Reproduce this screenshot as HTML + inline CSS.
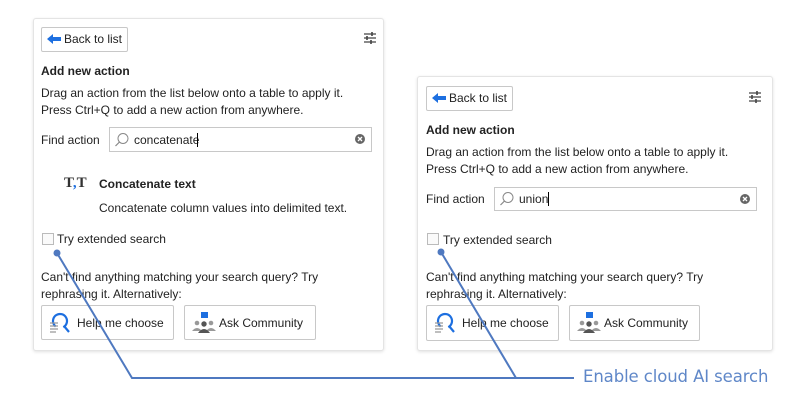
<!DOCTYPE html>
<html><head><style>
body{margin:0;width:802px;height:420px;background:#fff;position:relative;overflow:hidden;font-family:"Liberation Sans",sans-serif;font-size:12px;color:#222}
.a{position:absolute;white-space:nowrap}
.panel{position:absolute;background:#fff;border:1px solid #e4e4e4;border-radius:3px;box-shadow:0 1px 3px rgba(0,0,0,.12)}
.btn{position:absolute;border:1px solid #c8c8c8;border-radius:2px;background:#fff;box-sizing:border-box}
.box{position:absolute;border:1px solid #c8c8c8;background:#fff;box-sizing:border-box}
.cb{position:absolute;width:12px;height:12px;border:1px solid #bbb;box-sizing:border-box;background:#fafafa}
b{font-weight:bold}
</style></head><body>

<!-- panel 1 -->
<div class="panel" style="left:33px;top:18px;width:349px;height:331px"></div>
<div class="btn" style="left:41px;top:27px;width:87px;height:25px"></div>
<svg class="a" style="left:46px;top:33px" width="16" height="12"><path d="M1 6 L7 1 L7 4 L15 4 L15 8 L7 8 L7 11 Z" fill="#1d6fe0"/></svg>
<div class="a" style="left:64px;top:32px">Back to list</div>
<svg class="a" style="left:363px;top:31px" width="14" height="14"><g stroke="#444" stroke-width="1.2"><path d="M1 3H13M1 7H13M1 11H13"/><path d="M9 1V5M4 5V9M8 9V13" stroke-width="1.6"/></g></svg>
<div class="a" style="left:41px;top:64px"><b>Add new action</b></div>
<div class="a" style="left:41px;top:85px;line-height:17px">Drag an action from the list below onto a table to apply it.<br>Press Ctrl+Q to add a new action from anywhere.</div>
<div class="a" style="left:41px;top:133px">Find action</div>
<div class="box" style="left:109px;top:127px;width:263px;height:25px"></div>
<svg class="a" style="left:114px;top:132px" width="16" height="16"><circle cx="9" cy="6.5" r="5" fill="none" stroke="#888" stroke-width="1"/><path d="M5.5 10 L1.5 14" stroke="#888" stroke-width="1.2"/></svg>
<div class="a" style="left:134px;top:133px">concatenate<span style="border-left:1px solid #000;margin-left:-2px">&nbsp;</span></div>
<svg class="a" style="left:354px;top:133px" width="12" height="12"><circle cx="6" cy="6" r="5" fill="#666"/><path d="M4 4L8 8M8 4L4 8" stroke="#fff" stroke-width="1.3"/></svg>
<div class="a" style="left:64px;top:175px;font-family:'Liberation Serif',serif;font-size:15px;font-weight:bold;color:#333">T<span style="color:#1d6fe0">,</span>T</div>
<div class="a" style="left:99px;top:177px"><b>Concatenate text</b></div>
<div class="a" style="left:99px;top:201px">Concatenate column values into delimited text.</div>
<div class="cb" style="left:42px;top:233px"></div>
<div class="a" style="left:57px;top:232px">Try extended search</div>
<div class="a" style="left:41px;top:269px;line-height:17px">Can't find anything matching your search query? Try<br>rephrasing it. Alternatively:</div>
<div class="btn" style="left:41px;top:305px;width:133px;height:35px"></div>
<svg class="a" style="left:48px;top:311px" width="24" height="24"><circle cx="12" cy="10" r="7" fill="none" stroke="#1d6fe0" stroke-width="2.2" stroke-dasharray="33 8" transform="rotate(150 12 10)"/><path d="M16 15 L21 21" stroke="#1d6fe0" stroke-width="2.2"/><path d="M2 12H10M2 15H10M2 18H10M2 21H8" stroke="#999" stroke-width="1.3"/></svg>
<div class="a" style="left:77px;top:316px">Help me choose</div>
<div class="btn" style="left:184px;top:305px;width:132px;height:35px"></div>
<svg class="a" style="left:191px;top:311px" width="26" height="24"><rect x="10" y="1" width="7" height="6" fill="#1d6fe0"/><circle cx="6" cy="12" r="2.3" fill="#999"/><circle cx="20" cy="12" r="2.3" fill="#999"/><path d="M1 20 Q6 14 11 20Z M15 20 Q20 14 25 20Z" fill="#999"/><circle cx="13" cy="13" r="2.7" fill="#555"/><path d="M7 22 Q13 14 19 22Z" fill="#555"/></svg>
<div class="a" style="left:219px;top:316px">Ask Community</div>

<!-- panel 2 -->
<div class="panel" style="left:417px;top:76px;width:354px;height:273px"></div>
<div class="btn" style="left:426px;top:86px;width:87px;height:25px"></div>
<svg class="a" style="left:431px;top:92px" width="16" height="12"><path d="M1 6 L7 1 L7 4 L15 4 L15 8 L7 8 L7 11 Z" fill="#1d6fe0"/></svg>
<div class="a" style="left:449px;top:91px">Back to list</div>
<svg class="a" style="left:748px;top:90px" width="14" height="14"><g stroke="#444" stroke-width="1.2"><path d="M1 3H13M1 7H13M1 11H13"/><path d="M9 1V5M4 5V9M8 9V13" stroke-width="1.6"/></g></svg>
<div class="a" style="left:426px;top:123px"><b>Add new action</b></div>
<div class="a" style="left:426px;top:144px;line-height:17px">Drag an action from the list below onto a table to apply it.<br>Press Ctrl+Q to add a new action from anywhere.</div>
<div class="a" style="left:426px;top:192px">Find action</div>
<div class="box" style="left:494px;top:187px;width:263px;height:24px"></div>
<svg class="a" style="left:499px;top:191px" width="16" height="16"><circle cx="9" cy="6.5" r="5" fill="none" stroke="#888" stroke-width="1"/><path d="M5.5 10 L1.5 14" stroke="#888" stroke-width="1.2"/></svg>
<div class="a" style="left:519px;top:192px">union<span style="border-left:1px solid #000">&nbsp;</span></div>
<svg class="a" style="left:739px;top:193px" width="12" height="12"><circle cx="6" cy="6" r="5" fill="#666"/><path d="M4 4L8 8M8 4L4 8" stroke="#fff" stroke-width="1.3"/></svg>
<div class="cb" style="left:427px;top:233px"></div>
<div class="a" style="left:443px;top:233px">Try extended search</div>
<div class="a" style="left:426px;top:269px;line-height:17px">Can't find anything matching your search query? Try<br>rephrasing it. Alternatively:</div>
<div class="btn" style="left:426px;top:305px;width:133px;height:36px"></div>
<svg class="a" style="left:433px;top:311px" width="24" height="24"><circle cx="12" cy="10" r="7" fill="none" stroke="#1d6fe0" stroke-width="2.2" stroke-dasharray="33 8" transform="rotate(150 12 10)"/><path d="M16 15 L21 21" stroke="#1d6fe0" stroke-width="2.2"/><path d="M2 12H10M2 15H10M2 18H10M2 21H8" stroke="#999" stroke-width="1.3"/></svg>
<div class="a" style="left:462px;top:316px">Help me choose</div>
<div class="btn" style="left:569px;top:305px;width:131px;height:36px"></div>
<svg class="a" style="left:576px;top:311px" width="26" height="24"><rect x="10" y="1" width="7" height="6" fill="#1d6fe0"/><circle cx="6" cy="12" r="2.3" fill="#999"/><circle cx="20" cy="12" r="2.3" fill="#999"/><path d="M1 20 Q6 14 11 20Z M15 20 Q20 14 25 20Z" fill="#999"/><circle cx="13" cy="13" r="2.7" fill="#555"/><path d="M7 22 Q13 14 19 22Z" fill="#555"/></svg>
<div class="a" style="left:604px;top:316px">Ask Community</div>

<!-- callout -->
<svg class="a" style="left:0;top:0" width="802" height="420"><g stroke="#4f79c0" stroke-width="2" fill="none"><path d="M57 253 L132 378 L574 378"/><path d="M441 252 L516 378"/></g><circle cx="57" cy="253" r="3.5" fill="#4f79c0"/><circle cx="441" cy="252" r="3.5" fill="#4f79c0"/></svg>
<div class="a" style="left:583px;top:367px;font-family:'DejaVu Sans',sans-serif;font-size:16.5px;letter-spacing:-0.1px;color:#5f87c8">Enable cloud AI search</div>
</body></html>
